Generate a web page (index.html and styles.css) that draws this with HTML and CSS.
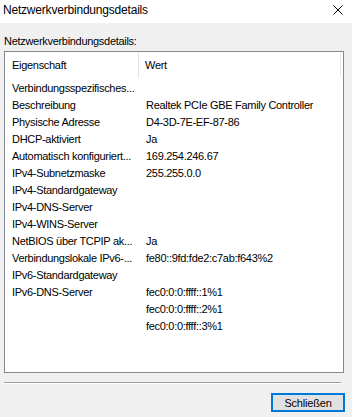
FILE: index.html
```html
<!DOCTYPE html>
<html lang="de">
<head>
  <meta charset="UTF-8" />
  <title>Netzwerkverbindungsdetails</title>
  <link rel="stylesheet" href="styles.css">
</head>
<body>
  <div class="window">
    <!-- Titelleiste -->
    <div class="titlebar">
      <span class="title">Netzwerkverbindungsdetails</span>
      <svg class="close" width="10" height="10" viewBox="0 0 10 10">
        <path d="M0.5 0.5 L9.5 9.5 M9.5 0.5 L0.5 9.5" stroke="#000" stroke-width="1" fill="none"/>
      </svg>
    </div>

    <div class="content">
      <div class="label">Netzwerkverbindungsdetails:</div>

      <div class="listbox">
        <div class="header">
          <div class="head-cell first">Eigenschaft</div>
          <div class="head-cell second">Wert</div>
        </div>
        <div class="rows">
          <div class="row"><span>Verbindungsspezifisches...</span><span></span></div>
          <div class="row"><span>Beschreibung</span><span>Realtek PCIe GBE Family Controller</span></div>
          <div class="row"><span>Physische Adresse</span><span>D4-3D-7E-EF-87-86</span></div>
          <div class="row"><span>DHCP-aktiviert</span><span>Ja</span></div>
          <div class="row"><span>Automatisch konfiguriert...</span><span>169.254.246.67</span></div>
          <div class="row"><span>IPv4-Subnetzmaske</span><span>255.255.0.0</span></div>
          <div class="row"><span>IPv4-Standardgateway</span><span></span></div>
          <div class="row"><span>IPv4-DNS-Server</span><span></span></div>
          <div class="row"><span>IPv4-WINS-Server</span><span></span></div>
          <div class="row"><span>NetBIOS über TCPIP ak...</span><span>Ja</span></div>
          <div class="row"><span>Verbindungslokale IPv6-...</span><span>fe80::9fd:fde2:c7ab:f643%2</span></div>
          <div class="row"><span>IPv6-Standardgateway</span><span></span></div>
          <div class="row"><span>IPv6-DNS-Server</span><span>fec0:0:0:ffff::1%1</span></div>
          <div class="row"><span></span><span>fec0:0:0:ffff::2%1</span></div>
          <div class="row"><span></span><span>fec0:0:0:ffff::3%1</span></div>
        </div>
      </div>

      <div class="separator"></div>

      <div class="buttons">
        <button class="btn">Schließen</button>
      </div>
    </div>
  </div>
</body>
</html>
```

FILE: styles.css
```css
html, body {
  margin: 0;
  padding: 0;
  overflow: hidden;
}

body {
  font-family: "Liberation Sans", Arial, sans-serif;
  font-size: 11px;
  letter-spacing: -0.3px;
  color: #000;
  background: #f0f0f0;
}

.window {
  width: 352px;
  height: 417px;
  display: flex;
  flex-direction: column;
}

.titlebar {
  height: 23px;
  background: #fff;
  display: flex;
  justify-content: space-between;
  align-items: center;
  padding: 0 9px 4px 3px;
  box-sizing: border-box;
}

.title {
  font-size: 12px;
  letter-spacing: -0.2px;
  color: #000;
}

.close {
  display: block;
}

.content {
  flex: 1;
  background: #f0f0f0;
  padding: 0 8px 0 4px;
  display: flex;
  flex-direction: column;
}

.label {
  margin-top: 11px;
  height: 17px;
  line-height: 14px;
}

.listbox {
  height: 320px;
  border: 1px solid #828790;
  background: #fff;
  display: flex;
  flex-direction: column;
}

.header {
  height: 26px;
  display: flex;
  align-items: stretch;
}

.head-cell {
  display: flex;
  align-items: center;
  padding-left: 7px;
  box-sizing: border-box;
}

.head-cell.first {
  width: 134px;
  border-right: 1px solid #e5e5e5;
}

.head-cell.second {
  flex: 1;
  padding-left: 6px;
  margin-right: 2px;
  border-right: 1px solid #e5e5e5;
  margin-top: 1px;
  margin-bottom: 2px;
}

.rows {
  margin-top: 1px;
}

.row {
  height: 17px;
  display: grid;
  grid-template-columns: 134px 1fr;
  align-items: center;
  padding-left: 7px;
}

.separator {
  margin-top: 9px;
  margin-right: 3px;
  height: 1px;
  background: #a0a0a0;
  border-bottom: 1px solid #fff;
}

.buttons {
  display: flex;
  justify-content: flex-end;
  margin-top: 9px;
}

.btn {
  width: 74px;
  height: 19px;
  margin-right: -1px;
  padding: 0;
  border: 2px solid #0078d7;
  background: #e1e1e1;
  font-family: "Liberation Sans", Arial, sans-serif;
  font-size: 11px;
  letter-spacing: -0.2px;
  color: #000;
}
```
